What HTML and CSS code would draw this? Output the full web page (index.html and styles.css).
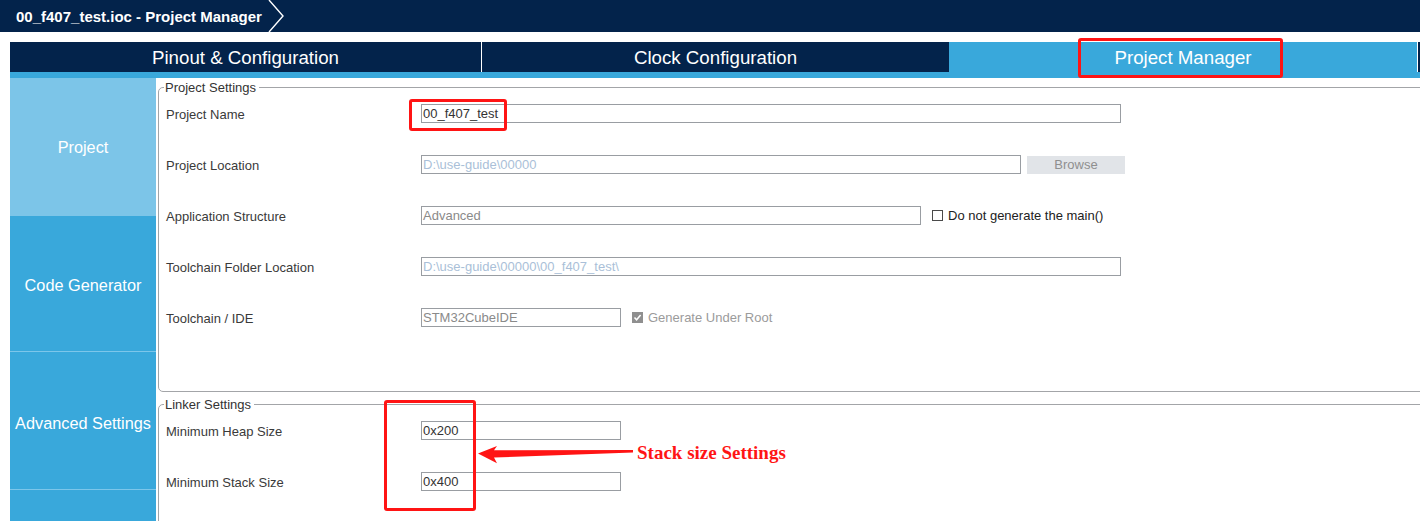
FILE: index.html
```html
<!DOCTYPE html>
<html lang="en">
<head>
<meta charset="utf-8">
<title>00_f407_test.ioc - Project Manager</title>
<link rel="stylesheet" href="styles.css">
</head>
<body>
<div class="app">
  <header class="topbar">
    <span class="title">00_f407_test.ioc - Project Manager</span>
    <svg class="crumb" width="20" height="32" viewBox="0 0 20 32"><polyline points="3,0 17,16 3,32" fill="none" stroke="#ffffff" stroke-width="1.4"/></svg>
  </header>

  <nav class="tabs">
    <div class="tab">Pinout &amp; Configuration</div>
    <div class="tab sep">Clock Configuration</div>
    <div class="tab active">Project Manager</div>
    <div class="tab sep rest"></div>
  </nav>
  <div class="strip"></div>

  <div class="main">
    <aside class="side">
      <div class="side-item current">Project</div>
      <div class="side-item">Code Generator</div>
      <div class="side-item tall">Advanced Settings</div>
      <div class="side-item last"></div>
    </aside>

    <section class="content">
      <fieldset class="group settings">
        <legend>Project Settings</legend>
        <div class="row first">
          <span class="label">Project Name</span>
          <div class="input w700 value">00_f407_test</div>
        </div>
        <div class="row">
          <span class="label">Project Location</span>
          <div class="input w600 path">D:\use-guide\00000</div>
          <div class="button">Browse</div>
        </div>
        <div class="row">
          <span class="label">Application Structure</span>
          <div class="input w500 muted">Advanced</div>
          <span class="check"></span>
          <span class="check-label">Do not generate the main()</span>
        </div>
        <div class="row">
          <span class="label">Toolchain Folder Location</span>
          <div class="input w700 path">D:\use-guide\00000\00_f407_test\</div>
        </div>
        <div class="row">
          <span class="label">Toolchain / IDE</span>
          <div class="input w200 muted">STM32CubeIDE</div>
          <span class="check checked"><svg width="11" height="11" viewBox="0 0 11 11"><polyline points="2.5,5.5 4.6,7.8 8.6,3" fill="none" stroke="#ffffff" stroke-width="1.5"/></svg></span>
          <span class="check-label disabled">Generate Under Root</span>
        </div>
      </fieldset>

      <fieldset class="group linker">
        <legend>Linker Settings</legend>
        <div class="row first">
          <span class="label">Minimum Heap Size</span>
          <div class="input w200 value">0x200</div>
        </div>
        <div class="row">
          <span class="label">Minimum Stack Size</span>
          <div class="input w200 value">0x400</div>
        </div>
      </fieldset>
    </section>
  </div>

  <div class="mark mark-tab"></div>
  <div class="mark mark-name"></div>
  <div class="mark mark-linker"></div>
  <svg class="arrow" width="170" height="30" viewBox="470 440 170 30"><polygon points="478,453.5 497,446 494,450.3 633,450 633,452.6 494,457.6 497,463.3" fill="#ff1414"/></svg>
  <div class="note">Stack size Settings</div>
</div>
</body>
</html>
```

FILE: styles.css
```css
html, body {
  margin: 0;
  padding: 0;
  background: #ffffff;
}

body {
  width: 1420px;
  height: 521px;
  overflow: hidden;
  font-family: "Liberation Sans", Arial, sans-serif;
}

.app {
  position: relative;
  width: 1420px;
  height: 521px;
  overflow: hidden;
}

/* header */
.topbar {
  height: 32px;
  background: #03234b;
  display: flex;
  align-items: center;
  padding-left: 16px;
}

.title {
  color: #ffffff;
  font-weight: bold;
  font-size: 15px;
}

.crumb {
  margin-left: 4px;
  display: block;
}

/* tabs */
.tabs {
  margin: 10px 0 0 10px;
  height: 30px;
  display: grid;
  grid-template-columns: 471px 468px 468px 1fr;
}

.tab {
  background: #03234b;
  color: #ffffff;
  font-size: 18.7px;
  display: flex;
  align-items: center;
  justify-content: center;
  padding-top: 2px;
  box-sizing: border-box;
}

.tab.sep {
  border-left: 1px solid #ffffff;
}

.tab.active {
  background: #39a8db;
}

.strip {
  margin-left: 10px;
  height: 6px;
  background: #39a8db;
}

/* main */
.main {
  display: flex;
  margin-left: 10px;
}

.side {
  width: 146px;
  flex: none;
  background: #39a8db;
  display: flex;
  flex-direction: column;
}

.side-item {
  box-sizing: border-box;
  height: 136px;
  padding-top: 3px;
  border-bottom: 1px solid #7cc6ea;
  color: #ffffff;
  font-size: 16.3px;
  display: flex;
  align-items: center;
  justify-content: center;
}

.side-item.current {
  height: 138px;
  padding-top: 1px;
  border-bottom: 0;
  background: #7cc5e8;
}

.side-item.tall {
  height: 138px;
  padding-top: 5px;
}

.side-item.last {
  border-bottom: 0;
  height: 40px;
}

.content {
  flex: 1;
  padding-left: 2px;
}

.group {
  margin: 0;
  border: 1px solid #a3a5a8;
  border-radius: 5px;
  width: 1300px;
  padding: 9px 0 0 7px;
  min-inline-size: 0;
}

.group legend {
  font-size: 13px;
  line-height: 15px;
  color: #333333;
  padding: 0 3px 0 1px;
  margin-left: -2px;
}

.settings {
  margin-top: 2px;
  padding-top: 9px;
  padding-bottom: 64px;
}

.linker {
  margin-top: 5px;
  padding-top: 9px;
  padding-bottom: 40px;
}

.row {
  display: flex;
  align-items: center;
  height: 19px;
  margin-top: 32px;
}

.row.first {
  margin-top: 0;
}

.label {
  width: 255px;
  flex: none;
  font-size: 13px;
  color: #3a3a3a;
  padding-top: 1px;
}

.input {
  box-sizing: border-box;
  height: 19px;
  border: 1px solid #999da2;
  background: #ffffff;
  font-size: 13px;
  line-height: 17px;
  padding-left: 1px;
  white-space: nowrap;
  overflow: hidden;
}

.w700 { width: 700px; }
.w600 { width: 600px; }
.w500 { width: 500px; }
.w200 { width: 200px; }

.value { color: #333333; }
.path { color: #aabfd8; }
.muted { color: #8a8a8a; }

.button {
  margin-left: 6px;
  width: 98px;
  height: 18px;
  background: #e1e4e8;
  color: #8f8f8f;
  font-size: 13px;
  display: flex;
  align-items: center;
  justify-content: center;
}

.check {
  box-sizing: border-box;
  width: 11px;
  height: 11px;
  border: 1px solid #4a4a4a;
  margin-left: 11px;
  flex: none;
}

.check.checked {
  border: 0;
  background: #8f8f8f;
}

.check.checked svg {
  display: block;
}

.check-label {
  margin-left: 5px;
  font-size: 13px;
  color: #222222;
}

.check-label.disabled {
  color: #9b9b9b;
}

/* annotations */
.mark {
  position: absolute;
  box-sizing: border-box;
  border: 3px solid #ff1414;
  border-radius: 3px;
}

.mark-tab {
  left: 1078px;
  top: 38px;
  width: 205px;
  height: 40px;
}

.mark-name {
  left: 409px;
  top: 99px;
  width: 98px;
  height: 32px;
}

.mark-linker {
  left: 384px;
  top: 400px;
  width: 92px;
  height: 111px;
}

.arrow {
  position: absolute;
  left: 470px;
  top: 440px;
}

.note {
  position: absolute;
  left: 637px;
  top: 442px;
  font-family: "Liberation Serif", "Times New Roman", serif;
  font-weight: bold;
  font-size: 19px;
  line-height: 22px;
  color: #ff1414;
}
```
